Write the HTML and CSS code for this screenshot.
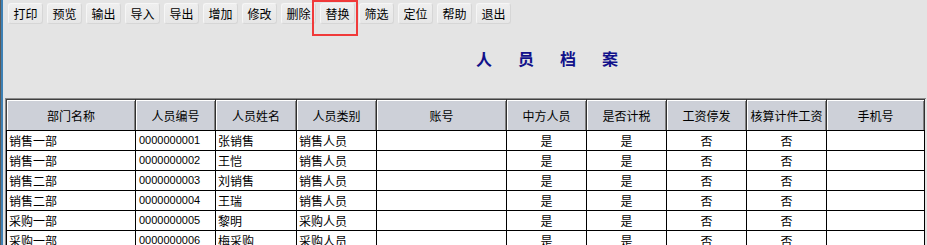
FILE: index.html
```html
<!DOCTYPE html>
<html lang="zh">
<head>
    <meta charset="UTF-8">
    <title>人员档案</title>
    <link rel="stylesheet" href="styles.css">
</head>
<body>
    <div class="window">
        <div class="toolbar">
            <button class="tool">打印</button>
            <button class="tool">预览</button>
            <button class="tool">输出</button>
            <button class="tool">导入</button>
            <button class="tool">导出</button>
            <button class="tool">增加</button>
            <button class="tool">修改</button>
            <button class="tool">删除</button>
            <button class="tool">替换</button>
            <button class="tool">筛选</button>
            <button class="tool">定位</button>
            <button class="tool">帮助</button>
            <button class="tool">退出</button>
        </div>
        <div class="mark"></div>

        <h1 class="title">人员档案</h1>

        <div class="grid-wrap">
            <table class="grid">
                <colgroup>
                    <col style="width:129px"><col style="width:80px"><col style="width:81px"><col style="width:80px">
                    <col style="width:130px"><col style="width:80px"><col style="width:80px"><col style="width:80px">
                    <col style="width:80px"><col style="width:98px">
                </colgroup>
                <thead>
                    <tr>
                        <th>部门名称</th><th>人员编号</th><th>人员姓名</th><th>人员类别</th><th>账号</th>
                        <th>中方人员</th><th>是否计税</th><th>工资停发</th><th>核算计件工资</th><th>手机号</th>
                    </tr>
                </thead>
                <tbody>
                    <tr><td>销售一部</td><td class="num">0000000001</td><td>张销售</td><td>销售人员</td><td></td><td class="c">是</td><td class="c">是</td><td class="c">否</td><td class="c">否</td><td></td></tr>
                    <tr><td>销售一部</td><td class="num">0000000002</td><td>王恺</td><td>销售人员</td><td></td><td class="c">是</td><td class="c">是</td><td class="c">否</td><td class="c">否</td><td></td></tr>
                    <tr><td>销售二部</td><td class="num">0000000003</td><td>刘销售</td><td>销售人员</td><td></td><td class="c">是</td><td class="c">是</td><td class="c">否</td><td class="c">否</td><td></td></tr>
                    <tr><td>销售二部</td><td class="num">0000000004</td><td>王瑞</td><td>销售人员</td><td></td><td class="c">是</td><td class="c">是</td><td class="c">否</td><td class="c">否</td><td></td></tr>
                    <tr><td>采购一部</td><td class="num">0000000005</td><td>黎明</td><td>采购人员</td><td></td><td class="c">是</td><td class="c">是</td><td class="c">否</td><td class="c">否</td><td></td></tr>
                    <tr><td>采购一部</td><td class="num">0000000006</td><td>梅采购</td><td>采购人员</td><td></td><td class="c">是</td><td class="c">是</td><td class="c">否</td><td class="c">否</td><td></td></tr>
                </tbody>
            </table>
        </div>
    </div>
</body>
</html>
```

FILE: styles.css
```css
body {
    margin: 0;
    width: 927px;
    height: 245px;
    overflow: hidden;
    background-color: #e4e4e4;
    font-family: "Noto Sans CJK SC", "DejaVu Sans", sans-serif;
    font-size: 12px;
    color: #000;
}
.window {
    position: relative;
    height: 245px;
    border-left: 1px solid #5a5a5a;
    box-shadow: inset 2px 0 0 #3d80b4;
    padding-left: 2px;
}
.toolbar {
    display: flex;
    gap: 4px;
    padding: 3px 0 0 5px;
}
.tool {
    width: 35px;
    height: 21px;
    padding: 0;
    font-family: "Noto Sans CJK SC", sans-serif;
    font-size: 12px;
    line-height: 19px;
    color: #000;
    background: linear-gradient(#efefef, #e6e6e6);
    border: 1px solid #d6d6d6;
    border-top-color: #f6f6f6;
    border-left-color: #f6f6f6;
    border-radius: 3px;
}
.mark {
    position: absolute;
    left: 311px;
    top: 0;
    width: 42px;
    height: 32px;
    border: 2px solid #f03a3a;
}
.title {
    margin: 0;
    padding: 24px 0 0 473px;
    height: 50px;
    font-size: 16px;
    line-height: 20px;
    font-weight: bold;
    color: #10108a;
    letter-spacing: 26px;
}
.grid-wrap {
    margin-left: 2px;
    width: 920px;
    border-top: 1px solid #8a8a8a;
    border-left: 1px solid #8a8a8a;
}
.grid {
    table-layout: fixed;
    border-collapse: collapse;
    width: 919px;
    border-top: 1px solid #404040;
    border-left: 1px solid #404040;
}
.grid th {
    height: 30px;
    padding: 0;
    font-weight: normal;
    background-color: #cdd0d8;
    border-right: 1px solid #303030;
    border-bottom: 1px solid #000;
    box-shadow: inset 1px 1px 0 #fff, inset -1px 0 0 #808080;
    white-space: nowrap;
    overflow: hidden;
}
.grid td {
    height: 19px;
    padding: 0 0 0 2px;
    background-color: #fff;
    border: 1px solid #000;
    border-top: none;
    white-space: nowrap;
    overflow: hidden;
    line-height: 19px;
}
.grid td.num {
    padding-left: 3px;
    font-family: "Liberation Sans", sans-serif;
    font-size: 11px;
}
.grid td.c {
    text-align: center;
    padding: 0;
}
```
